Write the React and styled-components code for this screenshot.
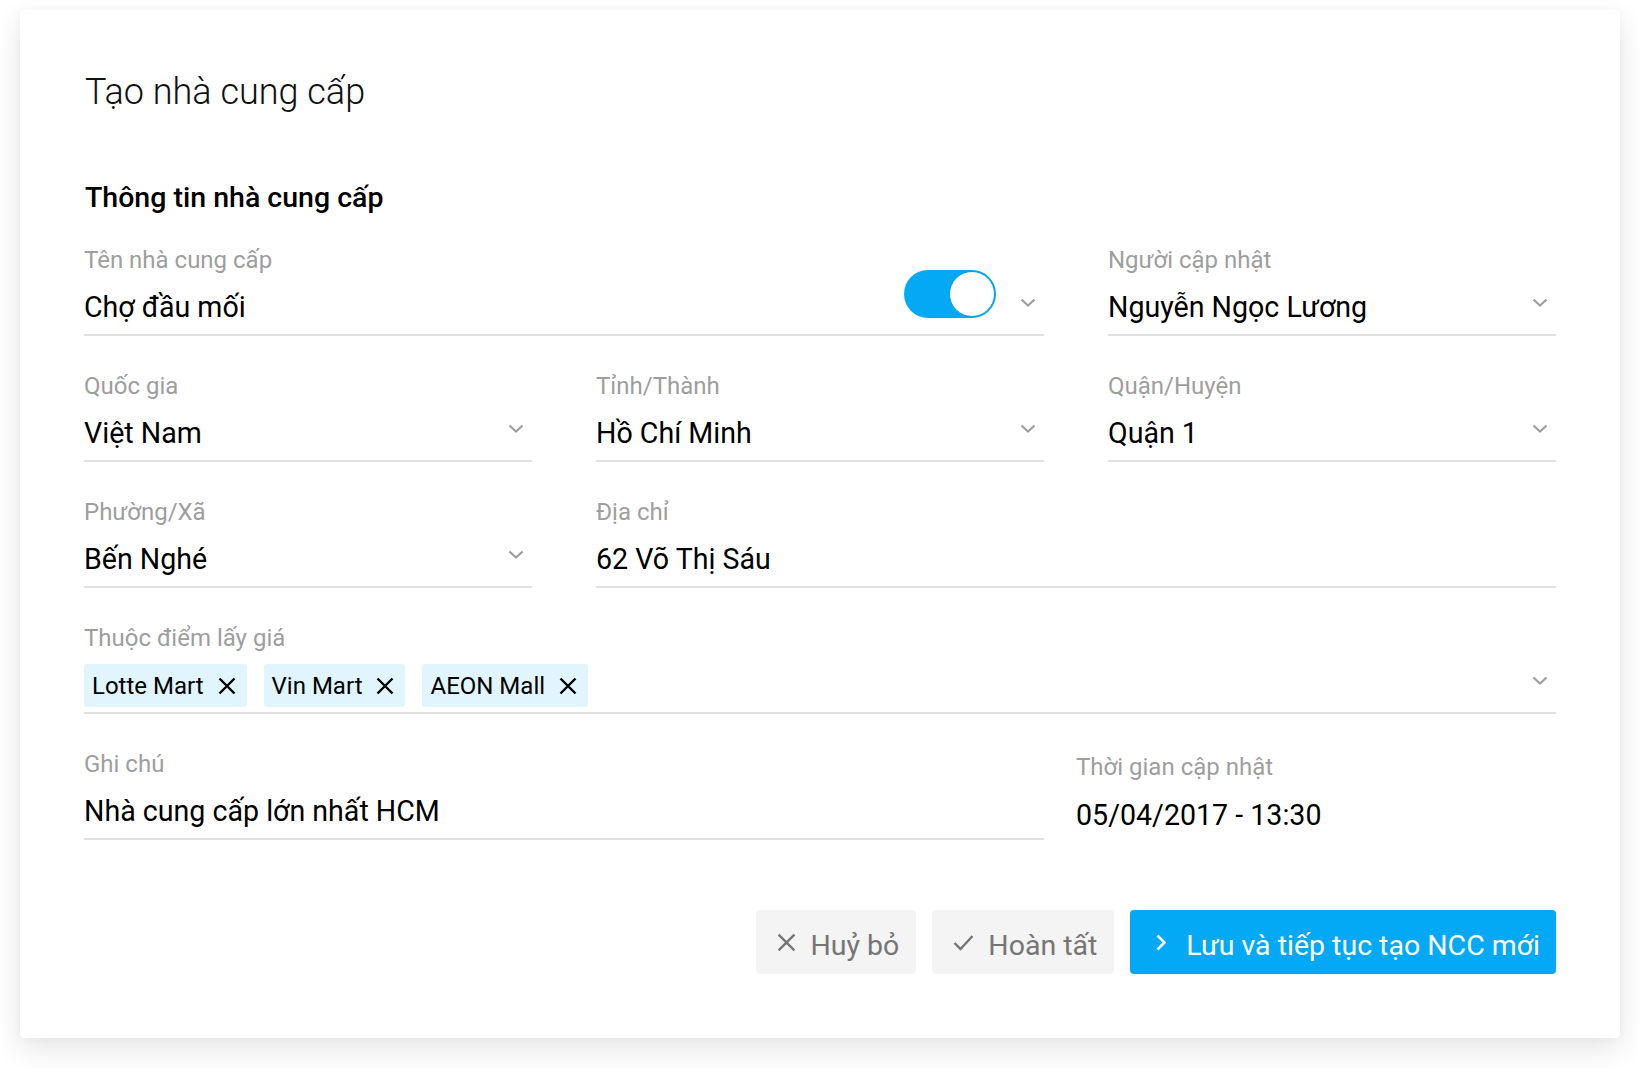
import React from "react";
import styled, { createGlobalStyle } from "styled-components";

const Global = createGlobalStyle`
  html, body { margin: 0; padding: 0; background: #ffffff; }
  body { font-family: Roboto, "Noto Sans", "Liberation Sans", sans-serif; color: #000; }
  * { box-sizing: border-box; }
`;

const Page = styled.div`
  padding: 10px 20px 31px;
`;

const Card = styled.div`
  width: 1600px;
  background: #fff;
  border-radius: 4px;
  box-shadow: 0 12px 30px rgba(0, 0, 0, 0.1), 0 0 10px rgba(0, 0, 0, 0.04);
  padding: 62px 64px 64px;
`;

const Title = styled.h1`
  margin: 0 0 0 1px;
  font-size: 36px;
  line-height: 40px;
  font-weight: 300;
  color: #111;
`;

const Heading = styled.h2`
  margin: 68px 0 0 1px;
  font-size: 28.5px;
  line-height: 36px;
  font-weight: 500;
  color: #000;
`;

const Form = styled.div`
  margin-top: 30px;
  display: flex;
  flex-direction: column;
  gap: 36px;
`;

const Row = styled.div`
  display: grid;
  grid-template-columns: ${(p) => p.$cols || "repeat(3, 1fr)"};
  column-gap: ${(p) => p.$gap || "64px"};
`;

const Field = styled.div`
  grid-column: span ${(p) => p.$span || 1};
  display: flex;
  flex-direction: column;
  padding-top: ${(p) => p.$offset || 0}px;
`;

const Label = styled.div`
  font-size: 24px;
  line-height: 28px;
  color: #9e9e9e;
`;

const Control = styled.div`
  margin-top: 12px;
  height: 50px;
  padding: 1px 0 7px;
  display: flex;
  align-items: center;
  border-bottom: ${(p) => (p.$plain ? "none" : "2px solid #e0e0e0")};
`;

const Value = styled.div`
  flex: 1;
  font-size: 28.6px;
  line-height: 40px;
  color: #000;
  white-space: nowrap;
`;

const ChevronBox = styled.span`
  display: inline-flex;
  margin: 0 8px 10px 0;
  color: #9e9e9e;
`;

const Chevron = () => (
  <ChevronBox>
    <svg width="16" height="9" viewBox="0 0 16 9" fill="none">
      <polyline points="1.5,1.5 8,7.5 14.5,1.5" stroke="currentColor" strokeWidth="2.2" />
    </svg>
  </ChevronBox>
);

const Toggle = styled.div`
  align-self: flex-start;
  margin: -17px 24px 0 0;
  width: 92px;
  height: 48px;
  border-radius: 24px;
  background: #03a9f4;
  position: relative;
  flex-shrink: 0;
`;

const Knob = styled.span`
  position: absolute;
  right: 1px;
  top: 1px;
  width: 46px;
  height: 46px;
  border-radius: 50%;
  background: #fff;
  border: 1.5px solid #039be5;
`;

const ChipList = styled.div`
  flex: 1;
  align-self: flex-start;
  margin-top: -1px;
  display: flex;
  gap: 17px;
`;

const Chip = styled.div`
  height: 43px;
  display: inline-flex;
  align-items: center;
  gap: 14px;
  padding: 0 11px 0 8px;
  background: #e1f5fe;
  border-radius: 3px;
  font-size: 24px;
  color: #000;
`;

const CloseIcon = ({ size = 18, color = "#000", width = 2.4 }) => (
  <svg width={size} height={size} viewBox="0 0 18 18" fill="none">
    <path d="M1.5 1.5 L16.5 16.5 M16.5 1.5 L1.5 16.5" stroke={color} strokeWidth={width} />
  </svg>
);

const Footer = styled.div`
  margin-top: 67px;
  display: flex;
  justify-content: flex-end;
  gap: 16px;
`;

const Button = styled.button`
  height: 64px;
  display: inline-flex;
  align-items: center;
  gap: ${(p) => (p.$primary ? "20px" : "14px")};
  padding: ${(p) => (p.$primary ? "8px 16px 0 26px" : "8px 17px 0 21px")};
  border: none;
  border-radius: 4px;
  background: ${(p) => (p.$primary ? "#03a9f4" : "#f4f4f4")};
  color: ${(p) => (p.$primary ? "#fff" : "#757575")};
  font-family: Roboto, "Noto Sans", sans-serif;
  font-size: 28.5px;
  line-height: 1;
  cursor: pointer;
`;

const ButtonIcon = styled.span`
  display: inline-flex;
  margin-top: -8px;
`;

const CheckIcon = () => (
  <svg width="21" height="17" viewBox="0 0 21 17" fill="none">
    <polyline points="1.5,9 7.5,15 19.5,2" stroke="#757575" strokeWidth="2.4" />
  </svg>
);

const NextIcon = () => (
  <svg width="10" height="17" viewBox="0 0 10 17" fill="none">
    <polyline points="1.5,1.5 8.5,8.5 1.5,15.5" stroke="#fff" strokeWidth="2.6" />
  </svg>
);

export default function App() {
  return (
    <Page>
      <Global />
      <Card>
        <Title>Tạo nhà cung cấp</Title>
        <Heading>Thông tin nhà cung cấp</Heading>
        <Form>
          <Row>
            <Field $span={2}>
              <Label>Tên nhà cung cấp</Label>
              <Control>
                <Value>Chợ đầu mối</Value>
                <Toggle>
                  <Knob />
                </Toggle>
                <Chevron />
              </Control>
            </Field>
            <Field>
              <Label>Người cập nhật</Label>
              <Control>
                <Value>Nguyễn Ngọc Lương</Value>
                <Chevron />
              </Control>
            </Field>
          </Row>
          <Row>
            <Field>
              <Label>Quốc gia</Label>
              <Control>
                <Value>Việt Nam</Value>
                <Chevron />
              </Control>
            </Field>
            <Field>
              <Label>Tỉnh/Thành</Label>
              <Control>
                <Value>Hồ Chí Minh</Value>
                <Chevron />
              </Control>
            </Field>
            <Field>
              <Label>Quận/Huyện</Label>
              <Control>
                <Value>Quận 1</Value>
                <Chevron />
              </Control>
            </Field>
          </Row>
          <Row>
            <Field>
              <Label>Phường/Xã</Label>
              <Control>
                <Value>Bến Nghé</Value>
                <Chevron />
              </Control>
            </Field>
            <Field $span={2}>
              <Label>Địa chỉ</Label>
              <Control>
                <Value>62 Võ Thị Sáu</Value>
              </Control>
            </Field>
          </Row>
          <Row $cols="1fr">
            <Field>
              <Label>Thuộc điểm lấy giá</Label>
              <Control>
                <ChipList>
                  {["Lotte Mart", "Vin Mart", "AEON Mall"].map((c) => (
                    <Chip key={c}>
                      {c}
                      <CloseIcon />
                    </Chip>
                  ))}
                </ChipList>
                <Chevron />
              </Control>
            </Field>
          </Row>
          <Row $cols="960px 1fr" $gap="32px">
            <Field>
              <Label>Ghi chú</Label>
              <Control>
                <Value>Nhà cung cấp lớn nhất HCM</Value>
              </Control>
            </Field>
            <Field $offset={3}>
              <Label>Thời gian cập nhật</Label>
              <Control $plain>
                <Value>05/04/2017 - 13:30</Value>
              </Control>
            </Field>
          </Row>
        </Form>
        <Footer>
          <Button>
            <ButtonIcon>
              <CloseIcon size={19} color="#757575" width={2.2} />
            </ButtonIcon>
            Huỷ bỏ
          </Button>
          <Button>
            <ButtonIcon>
              <CheckIcon />
            </ButtonIcon>
            Hoàn tất
          </Button>
          <Button $primary>
            <ButtonIcon>
              <NextIcon />
            </ButtonIcon>
            Lưu và tiếp tục tạo NCC mới
          </Button>
        </Footer>
      </Card>
    </Page>
  );
}
